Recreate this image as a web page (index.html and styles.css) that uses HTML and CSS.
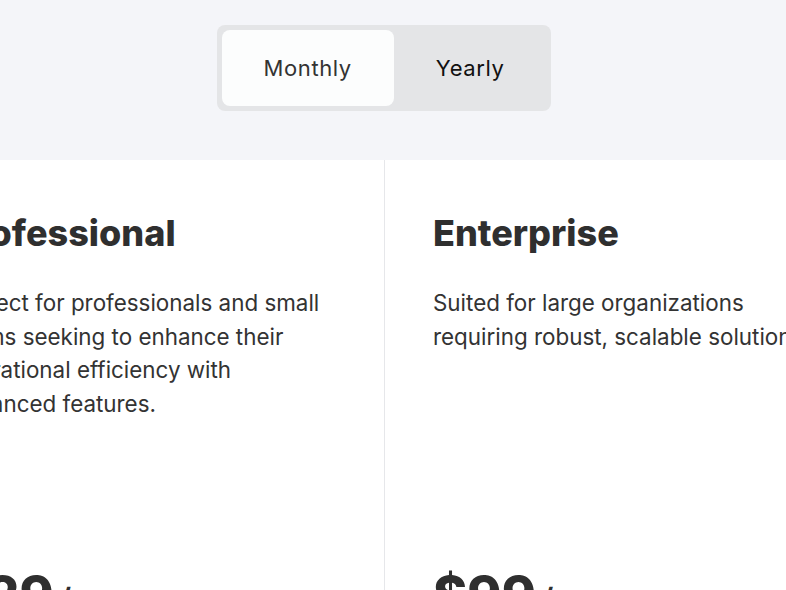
FILE: index.html
```html
<!DOCTYPE html>
<html lang="en">
<head>
<meta charset="utf-8">
<title>Pricing</title>
<link rel="stylesheet" href="styles.css">
</head>
<body>
<div class="page">
  <section class="band">
    <div class="inner">
      <div class="toggle">
        <button class="opt active">Monthly</button>
        <button class="opt">Yearly</button>
      </div>
    </div>
  </section>
  <section class="inner plans">
    <article class="plan">
      <h2 class="plan-name">Professional</h2>
      <p class="plan-desc">Perfect for professionals and small teams seeking to enhance their operational efficiency with advanced features.</p>
      <div class="price">$29<span class="per">/</span></div>
    </article>
    <article class="plan plan-divided">
      <h2 class="plan-name">Enterprise</h2>
      <p class="plan-desc">Suited for large organizations requiring robust, scalable solutions.</p>
      <div class="price">$99<span class="per">/</span></div>
    </article>
  </section>
</div>
</body>
</html>
```

FILE: styles.css
```css
* { box-sizing: border-box; }
html, body { margin: 0; padding: 0; background: #ffffff; }
body { overflow: hidden; font-family: Inter, "Liberation Sans", sans-serif; color: #333333; }
.page { width: 100%; }
.inner { width: 768px; }
.band {
  background: #f4f5f9;
  height: 160px;
  padding-top: 25px;
}
.band .inner { display: flex; justify-content: center; }
.toggle {
  display: flex;
  background: #e4e5e7;
  border-radius: 8px;
  padding: 5px;
}
.opt {
  border: 0;
  background: transparent;
  font-family: Inter, "Liberation Sans", sans-serif;
  font-size: 22px;
  letter-spacing: 0.6px;
  font-weight: 400;
  color: #111111;
  height: 76px;
  padding: 0 42px;
  border-radius: 8px;
  cursor: pointer;
}
.opt.active { background: #fcfdfd; color: #333333; }
.plans {
  display: flex;
  justify-content: center;
  height: 430px;
}
.plan {
  flex: 0 0 480px;
  width: 480px;
  padding: 50px 48px 0;
}
.plan-divided { border-left: 1px solid #e6e7ea; }
.plan-name {
  margin: 0;
  font-family: Inter, "Liberation Sans", sans-serif;
  font-weight: 800;
  font-size: 36px;
  line-height: 46px;
  color: #2f2f2f;
}
.plan-desc {
  margin: 30px 0 0;
  font-size: 22.4px;
  line-height: 33.6px;
  color: #333333;
  height: 280px;
}
.price {
  font-family: Inter, "Liberation Sans", sans-serif;
  font-weight: 800;
  font-size: 52px;
  line-height: 60px;
  color: #2f2f2f;
}
.per { font-size: 36px; font-weight: 500; color: #2f2f2f; margin-left: 4px; }
```
